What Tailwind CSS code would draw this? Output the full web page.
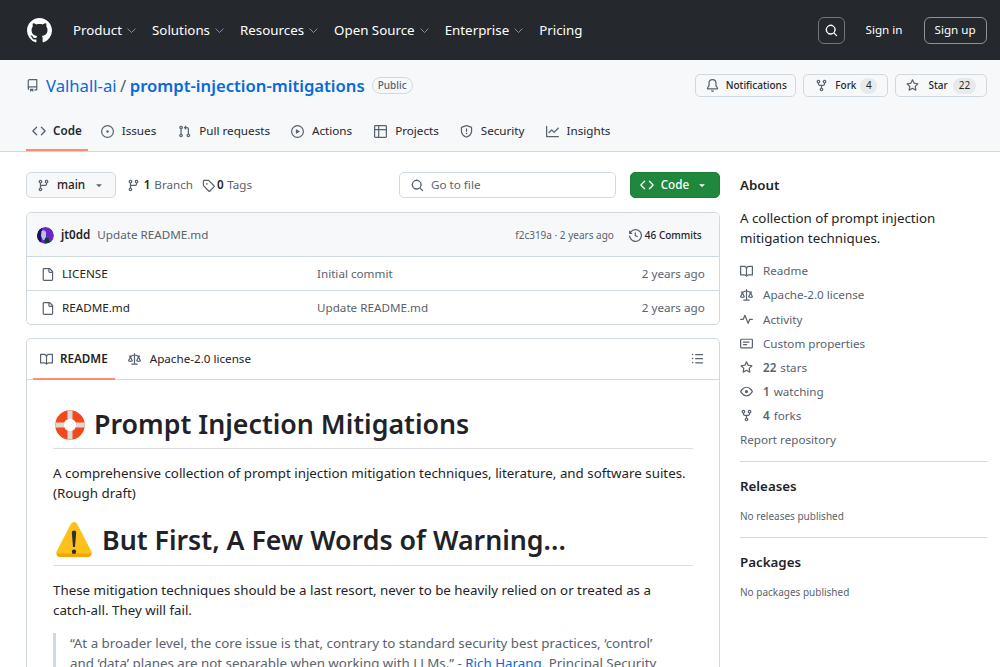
<!doctype html>
<html lang="en">
<head>
<meta charset="utf-8">
<title>prompt-injection-mitigations</title>
<script src="https://cdn.jsdelivr.net/npm/@tailwindcss/browser@4"></script>
</head>
<body class="h-[667px] w-[1000px] overflow-hidden bg-white font-['Noto_Sans',sans-serif] text-[#1f2328]">
<svg class="hidden" xmlns="http://www.w3.org/2000/svg">
<defs>
<symbol id="i-mark" viewBox="0 0 16 16"><path d="M8 0c4.42 0 8 3.58 8 8a8.013 8.013 0 0 1-5.45 7.59c-.4.08-.55-.17-.55-.38 0-.27.01-1.13.01-2.2 0-.75-.25-1.23-.54-1.48 1.78-.2 3.65-.88 3.65-3.95 0-.88-.31-1.59-.82-2.15.08-.2.36-1.02-.08-2.12 0 0-.67-.22-2.2.82-.64-.18-1.32-.27-2-.27-.68 0-1.36.09-2 .27-1.53-1.03-2.2-.82-2.2-.82-.44 1.1-.16 1.92-.08 2.12-.51.56-.82 1.28-.82 2.15 0 3.06 1.86 3.75 3.64 3.95-.23.2-.44.55-.51 1.07-.46.21-1.61.55-2.33-.66-.15-.24-.6-.83-1.23-.82-.67.01-.27.38.01.53.34.19.73.9.82 1.13.16.45.68 1.31 2.69.94 0 .67.01 1.3.01 1.49 0 .21-.15.45-.55.38A7.995 7.995 0 0 1 0 8c0-4.42 3.58-8 8-8Z"/></symbol>
<symbol id="i-repo" viewBox="0 0 16 16"><path d="M2 2.5A2.5 2.5 0 0 1 4.5 0h8.75a.75.75 0 0 1 .75.75v12.5a.75.75 0 0 1-.75.75h-2.5a.75.75 0 0 1 0-1.5h1.75v-2h-8a1 1 0 0 0-.714 1.7.75.75 0 1 1-1.072 1.05A2.495 2.495 0 0 1 2 11.5Zm10.5-1h-8a1 1 0 0 0-1 1v6.708A2.486 2.486 0 0 1 4.5 9h8ZM5 12.25a.25.25 0 0 1 .25-.25h3.5a.25.25 0 0 1 .25.25v3.25a.25.25 0 0 1-.4.2l-1.45-1.087a.249.249 0 0 0-.3 0L5.4 15.7a.25.25 0 0 1-.4-.2Z"/></symbol>
<symbol id="i-code" viewBox="0 0 16 16"><path d="m11.28 3.22 4.25 4.25a.75.75 0 0 1 0 1.06l-4.25 4.25a.749.749 0 0 1-1.275-.326.749.749 0 0 1 .215-.734L13.94 8l-3.72-3.72a.749.749 0 0 1 .326-1.275.749.749 0 0 1 .734.215Zm-6.56 0a.751.751 0 0 1 1.042.018.751.751 0 0 1 .018 1.042L2.06 8l3.72 3.72a.749.749 0 0 1-.326 1.275.749.749 0 0 1-.734-.215L.47 8.53a.75.75 0 0 1 0-1.06Z"/></symbol>
<symbol id="i-issue" viewBox="0 0 16 16"><path d="M8 9.5a1.5 1.5 0 1 0 0-3 1.5 1.5 0 0 0 0 3Z"/><path d="M8 0a8 8 0 1 1 0 16A8 8 0 0 1 8 0ZM1.5 8a6.5 6.5 0 1 0 13 0 6.5 6.5 0 0 0-13 0Z"/></symbol>
<symbol id="i-pr" viewBox="0 0 16 16"><path d="M1.5 3.25a2.25 2.25 0 1 1 3 2.122v5.256a2.251 2.251 0 1 1-1.5 0V5.372A2.25 2.25 0 0 1 1.5 3.25Zm5.677-.177L9.573.677A.25.25 0 0 1 10 .854V2.5h1A2.5 2.5 0 0 1 13.5 5v5.628a2.251 2.251 0 1 1-1.5 0V5a1 1 0 0 0-1-1h-1v1.646a.25.25 0 0 1-.427.177L7.177 3.427a.25.25 0 0 1 0-.354ZM3.75 2.5a.75.75 0 1 0 0 1.5.75.75 0 0 0 0-1.5Zm0 9.5a.75.75 0 1 0 0 1.5.75.75 0 0 0 0-1.5Zm8.25.75a.75.75 0 1 0 1.5 0 .75.75 0 0 0-1.5 0Z"/></symbol>
<symbol id="i-play" viewBox="0 0 16 16"><path d="M8 0a8 8 0 1 1 0 16A8 8 0 0 1 8 0ZM1.5 8a6.5 6.5 0 1 0 13 0 6.5 6.5 0 0 0-13 0Zm4.879-2.773 4.264 2.559a.25.25 0 0 1 0 .428l-4.264 2.559A.25.25 0 0 1 6 10.559V5.442a.25.25 0 0 1 .379-.215Z"/></symbol>
<symbol id="i-table" viewBox="0 0 16 16"><path d="M0 1.75C0 .784.784 0 1.75 0h12.5C15.216 0 16 .784 16 1.75v12.5A1.75 1.75 0 0 1 14.25 16H1.75A1.75 1.75 0 0 1 0 14.25ZM6.5 6.5v8h7.75a.25.25 0 0 0 .25-.25V6.5Zm8-1.5V1.75a.25.25 0 0 0-.25-.25H6.5V5Zm-13 1.5v7.75c0 .138.112.25.25.25H5v-8ZM5 5V1.5H1.75a.25.25 0 0 0-.25.25V5Z"/></symbol>
<symbol id="i-shield" viewBox="0 0 16 16"><path d="M7.467.133a1.748 1.748 0 0 1 1.066 0l5.25 1.68A1.75 1.75 0 0 1 15 3.48V7c0 1.566-.32 3.182-1.303 4.682-.983 1.498-2.585 2.813-5.032 3.855a1.697 1.697 0 0 1-1.33 0c-2.447-1.042-4.049-2.357-5.032-3.855C1.32 10.182 1 8.566 1 7V3.48a1.75 1.75 0 0 1 1.217-1.667Zm.61 1.429a.25.25 0 0 0-.153 0l-5.25 1.68a.25.25 0 0 0-.174.238V7c0 1.358.275 2.666 1.057 3.86.784 1.194 2.121 2.34 4.366 3.297a.196.196 0 0 0 .154 0c2.245-.956 3.582-2.104 4.366-3.298C13.225 9.666 13.5 8.36 13.5 7V3.48a.251.251 0 0 0-.174-.237l-5.25-1.68ZM8.75 4.75v3a.75.75 0 0 1-1.5 0v-3a.75.75 0 0 1 1.5 0ZM9 10.5a1 1 0 1 1-2 0 1 1 0 0 1 2 0Z"/></symbol>
<symbol id="i-graph" viewBox="0 0 16 16"><path d="M1.5 1.75V13.5h13.75a.75.75 0 0 1 0 1.5H.75a.75.75 0 0 1-.75-.75V1.75a.75.75 0 0 1 1.5 0Zm14.28 2.53-5.25 5.25a.75.75 0 0 1-1.06 0L7 7.06 4.28 9.78a.751.751 0 0 1-1.042-.018.751.751 0 0 1-.018-1.042l3.25-3.25a.75.75 0 0 1 1.06 0L10 7.94l4.72-4.72a.751.751 0 0 1 1.042.018.751.751 0 0 1 .018 1.042Z"/></symbol>
<symbol id="i-bell" viewBox="0 0 16 16"><path d="M8 16a2 2 0 0 0 1.985-1.75c.017-.137-.097-.25-.235-.25h-3.5c-.138 0-.252.113-.235.25A2 2 0 0 0 8 16ZM3 5a5 5 0 0 1 10 0v2.947c0 .05.015.098.042.139l1.703 2.555A1.519 1.519 0 0 1 13.482 13H2.518a1.516 1.516 0 0 1-1.263-2.36l1.703-2.554A.255.255 0 0 0 3 7.947Zm5-3.5A3.5 3.5 0 0 0 4.5 5v2.947c0 .346-.102.683-.294.97l-1.703 2.556a.017.017 0 0 0-.003.01l.001.006c0 .002.002.004.004.006l.006.004.007.001h10.964l.007-.001.006-.004.004-.006.001-.007a.017.017 0 0 0-.003-.01l-1.703-2.554a1.745 1.745 0 0 1-.294-.97V5A3.5 3.5 0 0 0 8 1.5Z"/></symbol>
<symbol id="i-fork" viewBox="0 0 16 16"><path d="M5 5.372v.878c0 .414.336.75.75.75h4.5a.75.75 0 0 0 .75-.75v-.878a2.25 2.25 0 1 1 1.5 0v.878a2.25 2.25 0 0 1-2.25 2.25h-1.5v2.128a2.251 2.251 0 1 1-1.5 0V8.5h-1.5A2.25 2.25 0 0 1 3.5 6.25v-.878a2.25 2.25 0 1 1 1.5 0ZM5 3.25a.75.75 0 1 0-1.5 0 .75.75 0 0 0 1.5 0Zm6.75.75a.75.75 0 1 0 0-1.5.75.75 0 0 0 0 1.5Zm-3 8.75a.75.75 0 1 0-1.5 0 .75.75 0 0 0 1.5 0Z"/></symbol>
<symbol id="i-star" viewBox="0 0 16 16"><path d="M8 .25a.75.75 0 0 1 .673.418l1.882 3.815 4.21.612a.75.75 0 0 1 .416 1.279l-3.046 2.97.719 4.192a.751.751 0 0 1-1.088.791L8 12.347l-3.766 1.98a.75.75 0 0 1-1.088-.79l.72-4.194L.818 6.374a.75.75 0 0 1 .416-1.28l4.21-.611L7.327.668A.75.75 0 0 1 8 .25Zm0 2.445L6.615 5.5a.75.75 0 0 1-.564.41l-3.097.45 2.24 2.184a.75.75 0 0 1 .216.664l-.528 3.084 2.769-1.456a.75.75 0 0 1 .698 0l2.77 1.456-.53-3.084a.75.75 0 0 1 .216-.664l2.24-2.183-3.096-.45a.75.75 0 0 1-.564-.41L8 2.694Z"/></symbol>
<symbol id="i-branch" viewBox="0 0 16 16"><path d="M9.5 3.25a2.25 2.25 0 1 1 3 2.122V6A2.5 2.5 0 0 1 10 8.5H6a1 1 0 0 0-1 1v1.128a2.251 2.251 0 1 1-1.5 0V5.372a2.25 2.25 0 1 1 1.5 0v1.836A2.493 2.493 0 0 1 6 7h4a1 1 0 0 0 1-1v-.628A2.25 2.25 0 0 1 9.5 3.25Zm-6 0a.75.75 0 1 0 1.5 0 .75.75 0 0 0-1.5 0Zm8.25-.75a.75.75 0 1 0 0 1.5.75.75 0 0 0 0-1.5ZM4.25 12a.75.75 0 1 0 0 1.5.75.75 0 0 0 0-1.5Z"/></symbol>
<symbol id="i-tag" viewBox="0 0 16 16"><path d="M1 7.775V2.75C1 1.784 1.784 1 2.75 1h5.025c.464 0 .91.184 1.238.513l6.25 6.25a1.75 1.75 0 0 1 0 2.474l-5.026 5.026a1.75 1.75 0 0 1-2.474 0l-6.25-6.25A1.752 1.752 0 0 1 1 7.775Zm1.5 0c0 .066.026.13.073.177l6.25 6.25a.25.25 0 0 0 .354 0l5.025-5.025a.25.25 0 0 0 0-.354l-6.25-6.25a.25.25 0 0 0-.177-.073H2.75a.25.25 0 0 0-.25.25ZM6 5a1 1 0 1 1 0 2 1 1 0 0 1 0-2Z"/></symbol>
<symbol id="i-search" viewBox="0 0 16 16"><path d="M10.68 11.74a6 6 0 0 1-7.922-8.982 6 6 0 0 1 8.982 7.922l3.04 3.04a.749.749 0 0 1-.326 1.275.749.749 0 0 1-.734-.215ZM11.5 7a4.499 4.499 0 1 0-8.997 0A4.499 4.499 0 0 0 11.5 7Z"/></symbol>
<symbol id="i-history" viewBox="0 0 16 16"><path d="m.427 1.927 1.215 1.215a8.002 8.002 0 1 1-1.6 5.685.75.75 0 1 1 1.493-.154 6.5 6.5 0 1 0 1.18-4.458l1.358 1.358A.25.25 0 0 1 3.896 6H.25A.25.25 0 0 1 0 5.75V2.104a.25.25 0 0 1 .427-.177ZM7.75 4a.75.75 0 0 1 .75.75v2.992l2.028.812a.75.75 0 0 1-.557 1.392l-2.5-1A.751.751 0 0 1 7 8.25v-3.5A.75.75 0 0 1 7.75 4Z"/></symbol>
<symbol id="i-file" viewBox="0 0 16 16"><path d="M2 1.75C2 .784 2.784 0 3.75 0h6.586c.464 0 .909.184 1.237.513l2.914 2.914c.329.328.513.773.513 1.237v9.586A1.75 1.75 0 0 1 13.25 16h-9.5A1.75 1.75 0 0 1 2 14.25Zm1.75-.25a.25.25 0 0 0-.25.25v12.5c0 .138.112.25.25.25h9.5a.25.25 0 0 0 .25-.25V6h-2.75A1.75 1.75 0 0 1 9 4.25V1.5Zm6.75.062V4.25c0 .138.112.25.25.25h2.688l-.011-.013-2.914-2.914-.013-.011Z"/></symbol>
<symbol id="i-book" viewBox="0 0 16 16"><path d="M0 1.75A.75.75 0 0 1 .75 1h4.253c1.227 0 2.317.59 3 1.501A3.743 3.743 0 0 1 11.006 1h4.245a.75.75 0 0 1 .75.75v10.5a.75.75 0 0 1-.75.75h-4.507a2.25 2.25 0 0 0-1.591.659l-.622.621a.75.75 0 0 1-1.06 0l-.622-.621A2.25 2.25 0 0 0 5.258 13H.75a.75.75 0 0 1-.75-.75Zm7.251 10.324.004-5.073-.002-2.253A2.25 2.25 0 0 0 5.003 2.5H1.5v9h3.757a3.75 3.75 0 0 1 1.994.574ZM8.755 4.75l-.004 7.322a3.752 3.752 0 0 1 1.992-.572H14.5v-9h-3.495a2.25 2.25 0 0 0-2.25 2.25Z"/></symbol>
<symbol id="i-law" viewBox="0 0 16 16"><path d="M8.75.75V2h.985c.304 0 .603.08.867.231l1.29.736c.038.022.08.033.124.033h2.234a.75.75 0 0 1 0 1.5h-.427l2.111 4.692a.75.75 0 0 1-.154.838l-.53-.53.529.531-.001.002-.002.002-.006.006-.006.005-.01.01-.045.04c-.21.176-.441.327-.686.45C14.556 10.78 13.88 11 13 11a4.498 4.498 0 0 1-2.023-.454 3.544 3.544 0 0 1-.686-.45l-.045-.04-.016-.015-.006-.006-.004-.004v-.001a.75.75 0 0 1-.154-.838L12.178 4.5h-.162c-.305 0-.604-.079-.868-.231l-1.29-.736a.245.245 0 0 0-.124-.033H8.75V13h2.5a.75.75 0 0 1 0 1.5h-6.5a.75.75 0 0 1 0-1.5h2.5V3.5h-.984a.245.245 0 0 0-.124.033l-1.289.737c-.265.15-.564.23-.869.23h-.162l2.112 4.692a.75.75 0 0 1-.154.838l-.53-.53.529.531-.001.002-.002.002-.006.006-.016.015-.045.04c-.21.176-.441.327-.686.45C4.556 10.78 3.88 11 3 11a4.498 4.498 0 0 1-2.023-.454 3.544 3.544 0 0 1-.686-.45l-.045-.04-.016-.015-.006-.006-.004-.004v-.001a.75.75 0 0 1-.154-.838L2.178 4.5H1.75a.75.75 0 0 1 0-1.5h2.234a.249.249 0 0 0 .125-.033l1.288-.737c.265-.15.564-.23.869-.23h.984V.75a.75.75 0 0 1 1.5 0Zm2.945 8.477c.285.135.718.273 1.305.273s1.02-.138 1.305-.273L13 6.327Zm-10 0c.285.135.718.273 1.305.273s1.02-.138 1.305-.273L3 6.327Z"/></symbol>
<symbol id="i-pulse" viewBox="0 0 16 16"><path d="M6 2c.306 0 .582.187.696.471L10 10.731l1.304-3.26A.751.751 0 0 1 12 7h3.25a.75.75 0 0 1 0 1.5h-2.742l-1.812 4.528a.751.751 0 0 1-1.392 0L6 4.77 4.696 8.03A.75.75 0 0 1 4 8.5H.75a.75.75 0 0 1 0-1.5h2.742l1.812-4.529A.751.751 0 0 1 6 2Z"/></symbol>
<symbol id="i-note" viewBox="0 0 16 16"><path d="M0 3.75C0 2.784.784 2 1.75 2h12.5c.966 0 1.75.784 1.75 1.75v8.5A1.75 1.75 0 0 1 14.25 14H1.75A1.75 1.75 0 0 1 0 12.25Zm1.75-.25a.25.25 0 0 0-.25.25v8.5c0 .138.112.25.25.25h12.5a.25.25 0 0 0 .25-.25v-8.5a.25.25 0 0 0-.25-.25ZM3.5 6.25a.75.75 0 0 1 .75-.75h7a.75.75 0 0 1 0 1.5h-7a.75.75 0 0 1-.75-.75Zm.75 2.25h4a.75.75 0 0 1 0 1.5h-4a.75.75 0 0 1 0-1.5Z"/></symbol>
<symbol id="i-eye" viewBox="0 0 16 16"><path d="M8 2c1.981 0 3.671.992 4.933 2.078 1.27 1.091 2.187 2.345 2.637 3.023a1.62 1.62 0 0 1 0 1.798c-.45.678-1.367 1.932-2.637 3.023C11.67 13.008 9.981 14 8 14c-1.981 0-3.671-.992-4.933-2.078C1.797 10.83.88 9.576.43 8.898a1.62 1.62 0 0 1 0-1.798c.45-.677 1.367-1.931 2.637-3.022C4.33 2.992 6.019 2 8 2ZM1.679 7.932a.12.12 0 0 0 0 .136c.411.622 1.241 1.75 2.366 2.717C5.176 11.758 6.527 12.5 8 12.5c1.473 0 2.825-.742 3.955-1.715 1.124-.967 1.954-2.096 2.366-2.717a.12.12 0 0 0 0-.136c-.412-.621-1.242-1.75-2.366-2.717C10.824 4.242 9.473 3.5 8 3.5c-1.473 0-2.825.742-3.955 1.715-1.124.967-1.954 2.096-2.366 2.717ZM8 10a2 2 0 1 1-.001-3.999A2 2 0 0 1 8 10Z"/></symbol>
<symbol id="i-list" viewBox="0 0 16 16"><path d="M5.75 2.5h8.5a.75.75 0 0 1 0 1.5h-8.5a.75.75 0 0 1 0-1.5Zm0 5h8.5a.75.75 0 0 1 0 1.5h-8.5a.75.75 0 0 1 0-1.5Zm0 5h8.5a.75.75 0 0 1 0 1.5h-8.5a.75.75 0 0 1 0-1.5ZM2 14a1 1 0 1 1 0-2 1 1 0 0 1 0 2Zm1-6a1 1 0 1 1-2 0 1 1 0 0 1 2 0ZM2 4a1 1 0 1 1 0-2 1 1 0 0 1 0 2Z"/></symbol>
<symbol id="i-chev" viewBox="0 0 16 16"><path d="M3.5 6 8 10.5 12.5 6" fill="none" stroke="currentColor" stroke-width="1.2" stroke-linecap="round" stroke-linejoin="round"/></symbol>
<symbol id="i-caret" viewBox="0 0 16 16"><path d="m4.427 7.427 3.396 3.396a.25.25 0 0 0 .354 0l3.396-3.396A.25.25 0 0 0 11.396 7H4.604a.25.25 0 0 0-.177.427Z"/></symbol>
</defs>
</svg>

<header class="flex h-[60px] items-center bg-[#25292e] pl-[27px] pr-[13.3px] text-[13.33px] text-white">
  <svg class="size-[25px] fill-white"><use href="#i-mark"/></svg>
  <nav class="ml-[21px] flex items-center pt-[1px]">
    <span class="flex items-center">Product<svg class="ml-[3px] size-[13px] text-[#8b949e]"><use href="#i-chev"/></svg></span>
    <span class="ml-[14px] flex items-center">Solutions<svg class="ml-[3px] size-[13px] text-[#8b949e]"><use href="#i-chev"/></svg></span>
    <span class="ml-[14px] flex items-center">Resources<svg class="ml-[3px] size-[13px] text-[#8b949e]"><use href="#i-chev"/></svg></span>
    <span class="ml-[14px] flex items-center">Open Source<svg class="ml-[3px] size-[13px] text-[#8b949e]"><use href="#i-chev"/></svg></span>
    <span class="ml-[14px] flex items-center">Enterprise<svg class="ml-[3px] size-[13px] text-[#8b949e]"><use href="#i-chev"/></svg></span>
    <span class="ml-[14px]">Pricing</span>
  </nav>
  <div class="ml-auto flex items-center">
    <span class="flex size-[27px] items-center justify-center rounded-[6px] border border-[#6e7681]"><svg class="size-[13px] fill-white"><use href="#i-search"/></svg></span>
    <span class="ml-[20px] text-[11.67px]">Sign in</span>
    <span class="ml-[21px] flex h-[27px] items-center rounded-[6px] border border-[#8b949e] px-[10px] text-[11.67px]">Sign up</span>
  </div>
</header>

<section class="h-[92px] border-b border-[#d1d9e0] bg-[#f6f8fa]">
  <div class="flex h-[50px] items-center pl-[26px] pr-[13.3px] pt-[1px]">
    <svg class="size-[13px] fill-[#59636e]"><use href="#i-repo"/></svg>
    <span class="ml-[7px] text-[16.67px] text-[#0969da]">Valhall-ai</span>
    <span class="mx-[3.500px] text-[16.67px] text-[#59636e]">/</span>
    <span class="text-[16.67px] font-semibold text-[#0969da]">prompt-injection-mitigations</span>
    <span class="ml-[7px] flex h-[17px] items-center rounded-full border border-[#d1d9e0] px-[5px] text-[10px] font-medium text-[#59636e]">Public</span>
    <div class="ml-auto flex items-center gap-[7px] text-[10px] font-medium text-[#25292e]">
      <span class="flex h-[23.5px] items-center rounded-[5px] border border-[#d1d9e0] bg-[#f6f8fa] pl-[10px] pr-[8.500px]"><svg class="mr-[7px] size-[13px] fill-[#59636e]"><use href="#i-bell"/></svg>Notifications</span>
      <span class="flex h-[23.5px] items-center rounded-[5px] border border-[#d1d9e0] bg-[#f6f8fa] pl-[11px] pr-[10px]"><svg class="mr-[7px] size-[13px] fill-[#59636e]"><use href="#i-fork"/></svg>Fork<span class="ml-[4px] flex h-[16px] min-w-[17px] items-center justify-center rounded-full bg-[#e7e9ec] px-[5px] font-normal">4</span></span>
      <span class="flex h-[23.5px] items-center rounded-[5px] border border-[#d1d9e0] bg-[#f6f8fa] pl-[10px] pr-[9.500px]"><svg class="mr-[9px] size-[13px] fill-[#59636e]"><use href="#i-star"/></svg>Star<span class="ml-[5px] flex h-[16px] min-w-[17px] items-center justify-center rounded-full bg-[#e7e9ec] px-[6px] font-normal">22</span></span>
    </div>
  </div>
  <nav class="flex h-[41px] items-start px-[26px] text-[11.67px] text-[#25292e]">
    <span class="flex h-[41px] items-center border-b-2 border-[#fd8c73] pl-[6px] pr-[6px] pt-[3px] font-semibold"><svg class="mr-[7px] size-[14px] fill-[#59636e]"><use href="#i-code"/></svg>Code</span>
    <span class="ml-[13px] flex h-[41px] items-center pt-[1px]"><svg class="mr-[8px] size-[13px] fill-[#59636e]"><use href="#i-issue"/></svg>Issues</span>
    <span class="ml-[22px] flex h-[41px] items-center pt-[1px]"><svg class="mr-[8px] size-[13px] fill-[#59636e]"><use href="#i-pr"/></svg>Pull requests</span>
    <span class="ml-[21px] flex h-[41px] items-center pt-[1px]"><svg class="mr-[8px] size-[13px] fill-[#59636e]"><use href="#i-play"/></svg>Actions</span>
    <span class="ml-[22px] flex h-[41px] items-center pt-[1px]"><svg class="mr-[8px] size-[13px] fill-[#59636e]"><use href="#i-table"/></svg>Projects</span>
    <span class="ml-[21px] flex h-[41px] items-center pt-[1px]"><svg class="mr-[8px] size-[13px] fill-[#59636e]"><use href="#i-shield"/></svg>Security</span>
    <span class="ml-[21px] flex h-[41px] items-center pt-[1px]"><svg class="mr-[8px] size-[13px] fill-[#59636e]"><use href="#i-graph"/></svg>Insights</span>
  </nav>
</section>

<main class="flex items-start gap-[20.3px] pl-[26px] pr-[13.3px] pt-[20px]">
  <div class="w-[693.7px] shrink-0">
    <div class="flex h-[26px] items-center text-[11.67px]">
      <span class="flex h-[26px] items-center rounded-[5px] border border-[#d1d9e0] bg-[#f6f8fa] pl-[10px] pr-[10px] font-medium"><svg class="mr-[7px] size-[13px] fill-[#59636e]"><use href="#i-branch"/></svg>main<svg class="ml-[8px] size-[12px] fill-[#59636e]"><use href="#i-caret"/></svg></span>
      <span class="ml-[11px] flex items-center text-[#59636e]"><svg class="mr-[3.500px] size-[13px] fill-[#59636e]"><use href="#i-branch"/></svg><b class="mr-[4px] font-semibold text-[#1f2328]">1</b>Branch</span>
      <span class="ml-[9px] flex items-center text-[#59636e]"><svg class="mr-[2px] size-[13px] fill-[#59636e]"><use href="#i-tag"/></svg><b class="mr-[3.500px] font-semibold text-[#1f2328]">0</b>Tags</span>
      <span class="ml-auto flex h-[26px] w-[217px] items-center rounded-[5px] border border-[#d1d9e0] pl-[11px] text-[#59636e]"><svg class="mr-[7px] size-[13px] fill-[#59636e]"><use href="#i-search"/></svg>Go to file</span>
      <span class="ml-[13.7px] flex h-[26px] w-[90px] items-center rounded-[5px] border border-[#1a7f37] bg-[#1f883d] pl-[9px] font-medium text-white"><svg class="mr-[7px] size-[14px] fill-white"><use href="#i-code"/></svg>Code<svg class="ml-[7px] size-[12px] fill-white"><use href="#i-caret"/></svg></span>
    </div>

    <div class="mt-[14px] overflow-hidden rounded-[5px] border border-[#d1d9e0] text-[11.67px]">
      <div class="flex h-[43px] items-center bg-[#f6f8fa] pl-[10px] pr-[17px] pt-[1px]">
        <svg class="size-[17px] rounded-full" viewBox="0 0 17 17"><circle cx="8.5" cy="8.5" r="8.5" fill="#6a26c8"/><path d="M0 8.500A8.500 8.500 0 0 1 5 .8L4 17H3A8.500 8.500 0 0 1 0 8.500Z" fill="#1d1257"/><path d="M4.500 4c1.500-1.500 4-1 4.500 1.500v4l-1.500 3.500H6L4 9Z" fill="#b7c0ee"/><path d="M8 11h3.500l1 5H7.500Z" fill="#123f22"/></svg>
        <span class="ml-[7px] font-semibold">jt0dd</span>
        <span class="ml-[7px] text-[#59636e]">Update README.md</span>
        <span class="ml-auto text-[10px] text-[#59636e]">f2c319a · 2 years ago</span>
        <span class="ml-[15px] flex items-center text-[10px] font-medium"><svg class="mr-[3px] size-[13px] fill-[#59636e]"><use href="#i-history"/></svg>46 Commits</span>
      </div>
      <div class="flex h-[34px] items-center border-t border-[#d1d9e0] pl-[14px] pr-[14px] pt-[1px]">
        <svg class="size-[13px] fill-[#59636e]"><use href="#i-file"/></svg>
        <span class="ml-[8px] w-[255px]">LICENSE</span>
        <span class="text-[#59636e]">Initial commit</span>
        <span class="ml-auto text-[#59636e]">2 years ago</span>
      </div>
      <div class="flex h-[34px] items-center border-t border-[#d1d9e0] pl-[14px] pr-[14px] pt-[1px]">
        <svg class="size-[13px] fill-[#59636e]"><use href="#i-file"/></svg>
        <span class="ml-[8px] w-[255px]">README.md</span>
        <span class="text-[#59636e]">Update README.md</span>
        <span class="ml-auto text-[#59636e]">2 years ago</span>
      </div>
    </div>

    <div class="mt-[13px] rounded-t-[5px] border border-[#d1d9e0]">
      <div class="flex h-[41px] items-start border-b border-[#d1d9e0] pl-[6px] pr-[14.5px] text-[11.67px]">
        <span class="flex h-[41px] items-center border-b-2 border-[#fd8c73] pl-[7px] pr-[7px] pt-[1px] font-semibold"><svg class="mr-[7px] size-[13px] fill-[#59636e]"><use href="#i-book"/></svg>README</span>
        <span class="ml-[6px] flex h-[41px] items-center pb-[1px] pl-[7px]"><svg class="mr-[9px] size-[13px] fill-[#59636e]"><use href="#i-law"/></svg>Apache-2.0 license</span>
        <svg class="ml-auto mt-[13px] size-[13px] fill-[#59636e]"><use href="#i-list"/></svg>
      </div>
      <article class="px-[26px] pt-[25px]">
        <h1 class="flex h-[44px] items-center border-b border-[#d8dee4] pb-[4px] text-[26.75px] font-semibold leading-none">
          <svg class="ml-[2px] mr-[9px] size-[30px] shrink-0" viewBox="0 0 30 30"><circle cx="15" cy="15" r="10.500" fill="none" stroke="#f4481c" stroke-width="8.500"/><path d="M12.500.4h5v8.600h-5ZM12.500 21h5v8.600h-5ZM.4 12.500h8.600v5H.4ZM21 12.500h8.600v5H21Z" fill="#dcd9d6"/></svg>
          <span>Prompt Injection Mitigations</span>
        </h1>
        <p class="mt-[14px] text-[13.33px] leading-[20px]">A comprehensive collection of prompt injection mitigation techniques, literature, and software suites. (Rough draft)</p>
        <h2 class="mt-[17px] flex h-[46px] items-center border-b border-[#d8dee4] pb-[5px] text-[26.75px] font-semibold leading-none">
          <svg class="ml-[2px] mr-[9px] size-[38px] shrink-0" viewBox="0 0 38 38"><path d="M19 1c1.500 0 2.600 1 3.300 2.300l14 27c1 2.200-.2 4.700-2.800 4.700H4.500c-2.600 0-3.800-2.500-2.800-4.700l14-27C16.400 2 17.500 1 19 1Z" fill="#fcc21b"/><path d="M1.300 32.500c.4 1.800 1.500 3.500 3.200 3.500h29c1.700 0 2.800-1.700 3.200-3.500Z" fill="#f2a600"/><path d="M16.800 11.500c0-1.200 1-2 2.200-2s2.200.8 2.200 2L20 26h-2ZM19 28.500a2.200 2.200 0 1 1 0 4.400 2.200 2.200 0 0 1 0-4.400Z" fill="#2f2f2f"/></svg>
          <span>But First, A Few Words of Warning...</span>
        </h2>
        <p class="mt-[14px] text-[13.33px] leading-[20px]">These mitigation techniques should be a last resort, never to be heavily relied on or treated as a <span class="whitespace-nowrap">catch-all</span>. They will fail.</p>
        <blockquote class="mt-[13px] border-l-[3px] border-[#d1d9e0] pl-[14px] pr-[30px] text-[13.33px] leading-[20px] text-[#59636e]">“At a broader level, the core issue is that, contrary to standard security best practices, ‘control’ and ‘data’ planes are not separable when working with LLMs.” - <span class="text-[#0969da]">Rich Harang</span>, Principal Security Architect at NVIDIA</blockquote>
      </article>
    </div>
  </div>

  <aside class="w-[246.7px] shrink-0">
    <h2 class="flex h-[27px] items-center text-[13.33px] font-semibold">About</h2>
    <p class="mt-[9px] text-[13.33px] leading-[20px]">A collection of prompt injection mitigation techniques.</p>
    <ul class="mt-[11px] text-[11.67px] text-[#59636e]">
      <li class="flex h-[24.15px] items-center"><svg class="mr-[10px] size-[13px] fill-[#59636e]"><use href="#i-book"/></svg>Readme</li>
      <li class="flex h-[24.15px] items-center"><svg class="mr-[10px] size-[13px] fill-[#59636e]"><use href="#i-law"/></svg>Apache-2.0 license</li>
      <li class="flex h-[24.15px] items-center"><svg class="mr-[10px] size-[13px] fill-[#59636e]"><use href="#i-pulse"/></svg>Activity</li>
      <li class="flex h-[24.15px] items-center"><svg class="mr-[10px] size-[13px] fill-[#59636e]"><use href="#i-note"/></svg>Custom properties</li>
      <li class="flex h-[24.15px] items-center"><svg class="mr-[10px] size-[13px] fill-[#59636e]"><use href="#i-star"/></svg><b class="mr-[4px] font-semibold">22</b>stars</li>
      <li class="flex h-[24.15px] items-center"><svg class="mr-[10px] size-[13px] fill-[#59636e]"><use href="#i-eye"/></svg><b class="mr-[4px] font-semibold">1</b>watching</li>
      <li class="flex h-[24.15px] items-center"><svg class="mr-[10px] size-[13px] fill-[#59636e]"><use href="#i-fork"/></svg><b class="mr-[4px] font-semibold">4</b>forks</li>
      <li class="flex h-[24.15px] items-center">Report repository</li>
    </ul>
    <div class="mt-[9px] border-t border-[#d1d9e0] pt-[14px]">
      <h2 class="text-[13.33px] font-semibold leading-[20px]">Releases</h2>
      <p class="mt-[13px] text-[10px] leading-[15px] text-[#59636e]">No releases published</p>
    </div>
    <div class="mt-[13px] border-t border-[#d1d9e0] pt-[14px]">
      <h2 class="text-[13.33px] font-semibold leading-[20px]">Packages</h2>
      <p class="mt-[13px] text-[10px] leading-[15px] text-[#59636e]">No packages published</p>
    </div>
  </aside>
</main>
</body>
</html>
